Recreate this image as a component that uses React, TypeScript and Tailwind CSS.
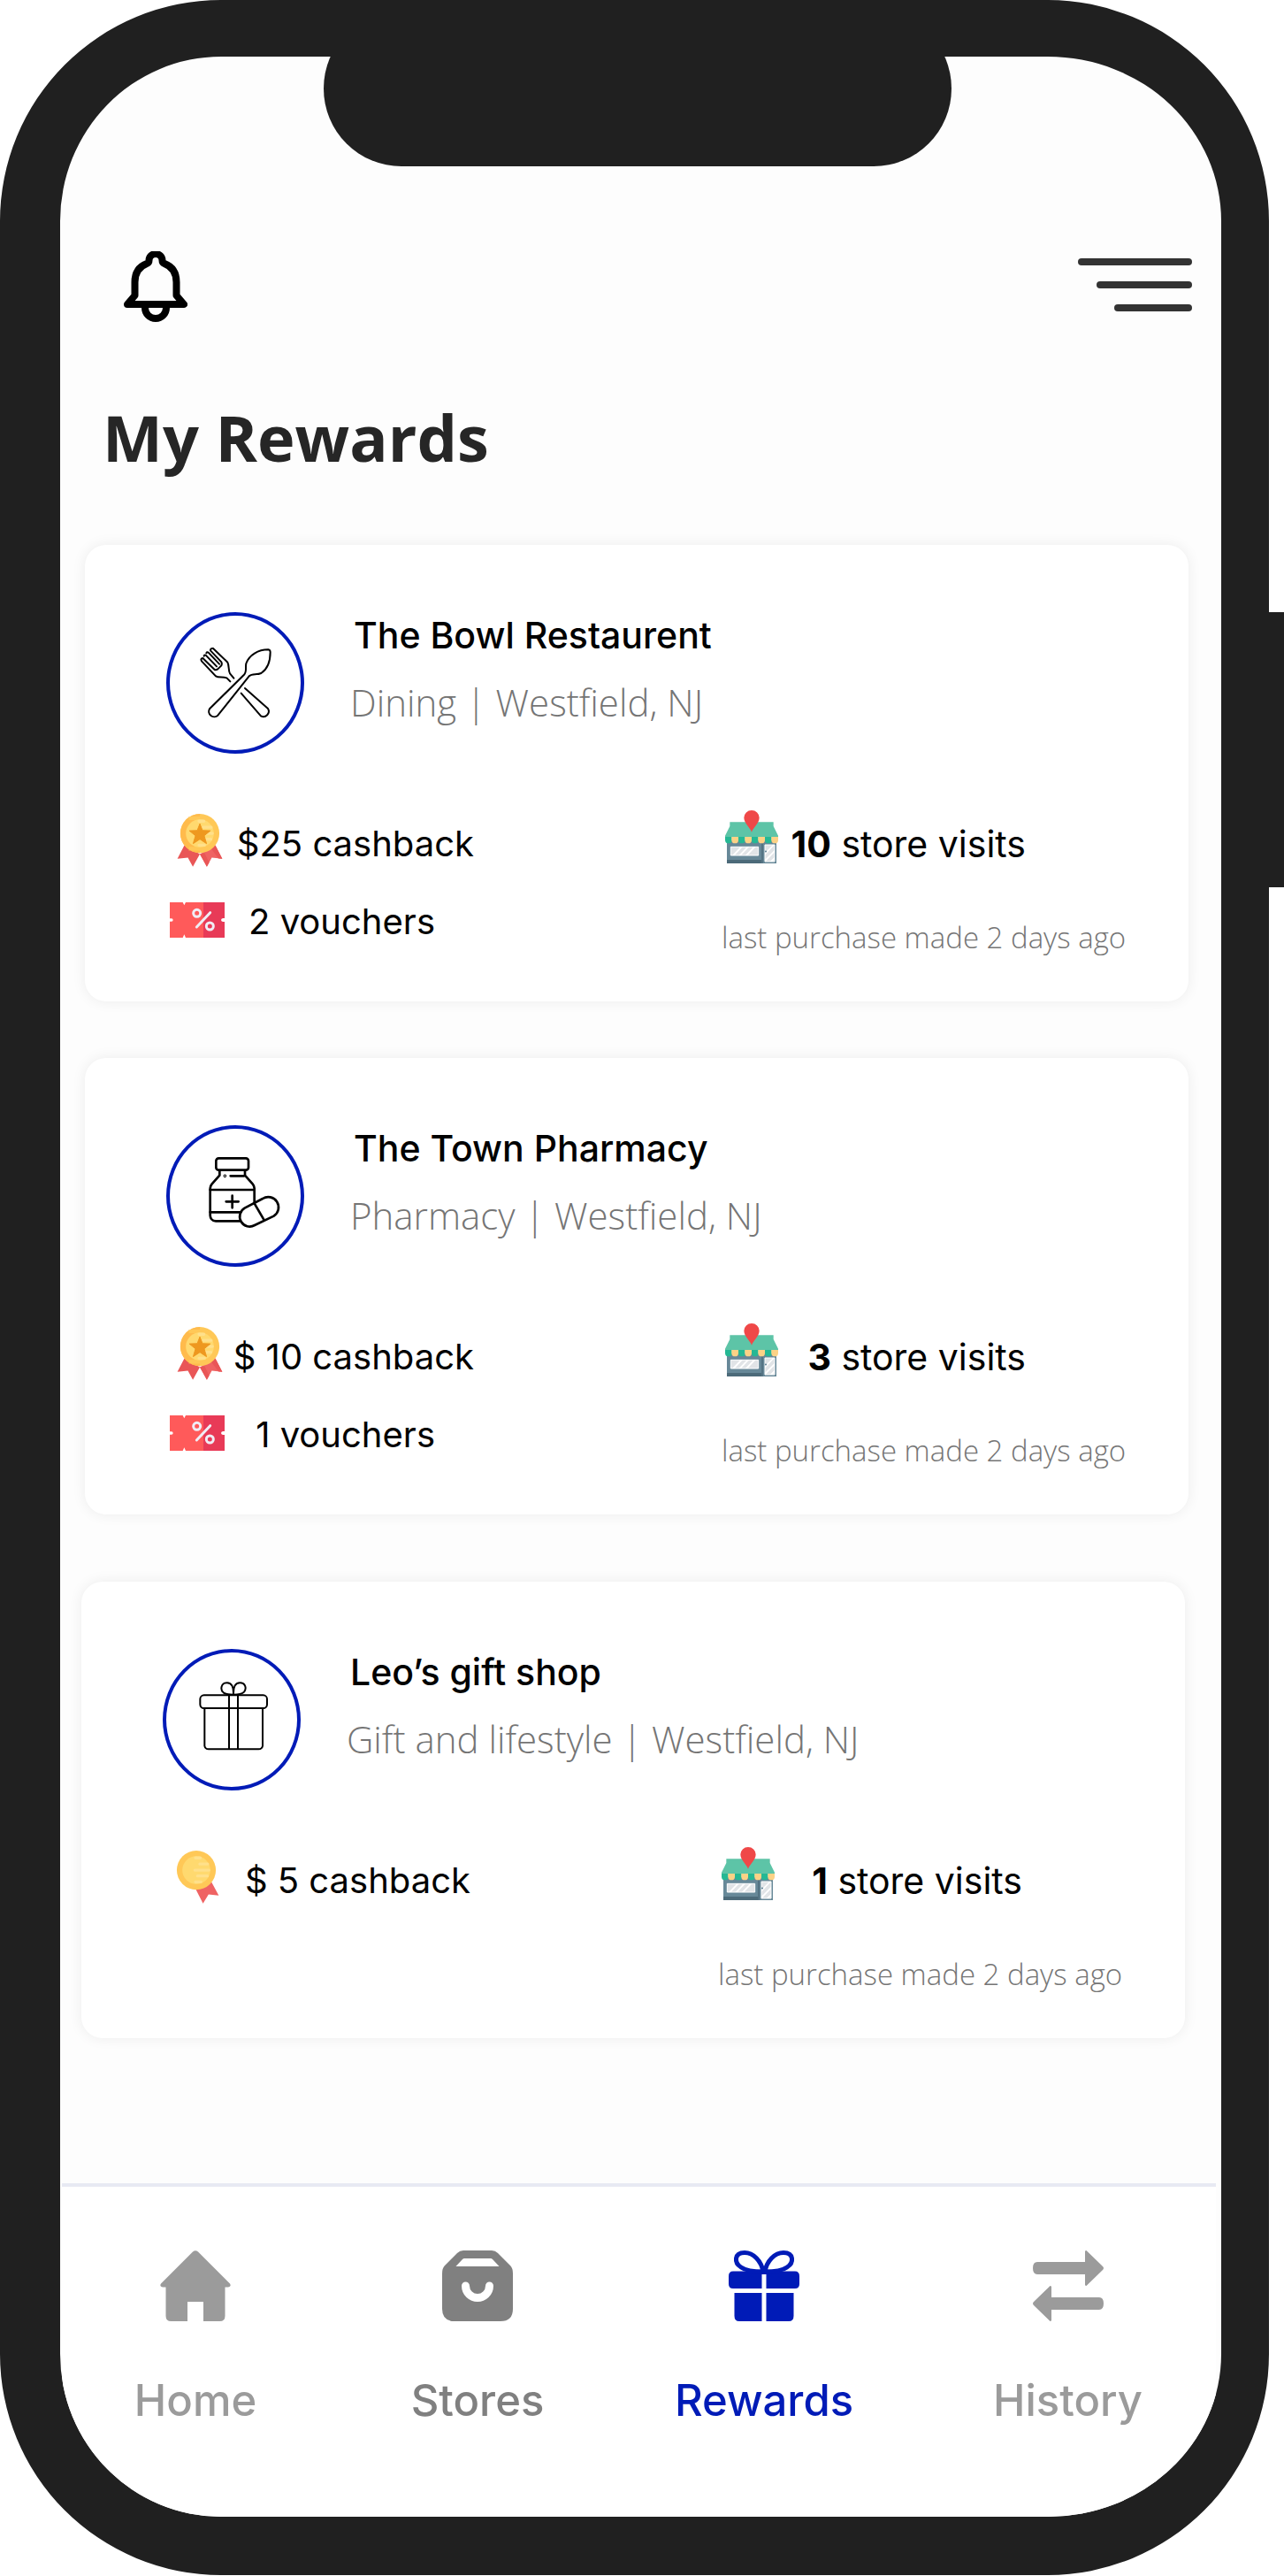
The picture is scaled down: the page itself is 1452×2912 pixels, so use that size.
import type { ReactNode } from "react";

function BellIcon() {
  return (
    <svg viewBox="0 0 72 80" className="h-20 w-[72px]" fill="none" stroke="#000" strokeWidth="8" strokeLinejoin="round" strokeLinecap="round" aria-hidden="true">
      <path d="M4 60 L12.5 50 V35 C12.5 24 18 17 26 14 Q28.500 13 28.500 10.500 A7.500 7.500 0 0 1 43.500 10.500 Q43.500 13 46 14 C54 17 59.500 24 59.500 35 V50 L68 60 Z" />
      <path d="M24 62 V64 A12 12 0 0 0 48 64 V62" />
    </svg>
  );
}

function DiningIcon() {
  return (
    <svg viewBox="-72 -78 444 456" className="h-full w-full" fill="none" stroke="#000" strokeWidth="6" strokeLinejoin="round" strokeLinecap="round" aria-hidden="true">
      <path d="M262 37 Q269 38 269 46 C269 78 258 104 238 117 C222 124 208 117 197 127 L91 260 A18 18 0 0 1 63 238 L180 122 C190 112 184 98 187 84 C197 56 228 37 262 37 Z" />
      <path d="M133 145 L122 134 C112 128 94 133 84 127 L36 76 Q31 67 40 66 L80 105 Q85 107 90 104 L103 91 Q106 85 103 79 L66 40 Q65 32 75 33 L124 80 C130 90 126 108 132 118 L145 134" />
      <path d="M44 59 Q44 54 50 56 L87 94 M52 49 Q54 44 59 47 L96 86" />
      <path d="M183 168 L261 237 A18 18 0 0 1 237 262 L170 185" />
    </svg>
  );
}

function PharmacyIcon() {
  return (
    <svg viewBox="66 78 444 456" className="h-full w-full" fill="none" stroke="#000" strokeWidth="8" strokeLinejoin="round" strokeLinecap="round" aria-hidden="true">
      <rect x="223" y="178" width="110" height="40" rx="9" />
      <path d="M235 220 V236 L209 265 Q203 272 203 280 V372 Q204 390 222 391 H304 M321 220 V236 L347 265 Q353 272 353 280 V330" />
      <path d="M203 285 H353 M203 361 H306 M272 238 H318 M278 305 V346 M257 325 H299" />
      <circle cx="253" cy="238" r="1.500" />
      <path d="M320 347 L381 315 A34 34 0 0 1 419 374 L354 405 A33 33 0 0 1 320 347 Z" />
      <path d="M353 331 L385 386" />
    </svg>
  );
}

function GiftShopIcon() {
  return (
    <svg viewBox="54 84 444 456" className="h-full w-full" fill="none" stroke="#000" strokeWidth="6" strokeLinejoin="round" aria-hidden="true">
      <rect x="169" y="229" width="227" height="44" rx="13" />
      <path d="M184 274 V401 Q186 412 198 412 H367 Q379 412 381 401 V274 M267 229 V411 M297 229 V411" />
      <path d="M282 227 C283 200 276 187 260 187 C240 187 236 210 248 220 Q258 227 282 227 C306 227 312 224 318 218 C328 205 322 187 304 187 C288 187 281 200 282 227" />
    </svg>
  );
}

function MedalIcon({ plain = false }: { plain?: boolean }) {
  return (
    <svg viewBox="90 88 156 182" className="ml-2 h-[60px] w-[52px]" aria-hidden="true">
      {!plain && <path d="M115 196 L91 242 L127 238 L144 269 L168 226 Z" fill="#e95657" />}
      <path d={plain ? "M167 222 L191 269 L210 238 L245 242 L220 196 Z" : "M221 196 L245 242 L209 238 L192 269 L168 226 Z"} fill="#ef6363" />
      {!plain && <path d="M221 196 L245 242 L232 241 L205 205 Z M168 226 L192 269 L200 255 L184 222 Z" fill="#e95657" />}
      <circle cx="168" cy="155" r="67" fill="#ffc857" />
      {!plain && (
        <path d="M168 88 A67 67 0 0 0 168 222 V214 H130 V201 H150 V109 H130 V97 H168 Z" fill="#ffbb4c" />
      )}
      <circle cx="168" cy="155" r="48" fill="#ffd96f" />
      <path d="M165 113 H182 M180 134 H207 M163 155 H211 M172 175 H206 M165 195 H184" stroke="#ffe08b" strokeWidth="10" strokeLinecap="round" />
      {!plain && <path d="M168 122 L177 145 L204 146 L183 163 L191 190 L168 175 L145 190 L153 163 L132 146 L159 145 Z" fill="#ee981f" stroke="#ee981f" strokeWidth="3" strokeLinejoin="round" />}
    </svg>
  );
}

function TicketIcon() {
  return (
    <svg viewBox="66 390 186 120" className="mb-1 h-10 w-[62px]" aria-hidden="true">
      <path d="M66 390 H110 L115 400 L120 390 H180 V510 H120 L115 499 L110 510 H66 V455 H72 Q77 455 77 450 Q77 445 72 445 H66 Z" fill="#ff5a5a" />
      <path d="M180 390 H252 V444 H246 Q240 445 240 450 Q240 455 246 456 H252 V510 H180 Z" fill="#e83a57" />
      <g fill="none" stroke="#f0edf5" strokeWidth="9">
        <circle cx="158" cy="427" r="12" />
        <circle cx="202" cy="471" r="12" />
        <path d="M157 474 L203 425" strokeLinecap="round" strokeWidth="9" />
      </g>
    </svg>
  );
}

function StoreIcon() {
  const scallops = [
    { x: 60, fill: "#25b894" },
    { x: 82, fill: "#fbd286" },
    { x: 105, fill: "#25b894" },
    { x: 127, fill: "#fbd286" },
    { x: 150, fill: "#25b894" },
    { x: 172, fill: "#fbd286" },
    { x: 195, fill: "#25b894" },
    { x: 217, fill: "#fbd286" },
  ];
  return (
    <svg viewBox="60 78 180 180" className="h-[60px] w-[60px] self-start" aria-hidden="true">
      <rect x="66" y="180" width="168" height="78" fill="#678898" />
      <rect x="66" y="246" width="120" height="12" fill="#4c6a79" />
      <rect x="183" y="190" width="6" height="68" fill="#547383" />
      <rect x="79" y="202" width="94" height="29" fill="#e1e4e7" />
      <rect x="195" y="195" width="33" height="57" fill="#e1e4e7" />
      <path d="M84 231 L112 202 H120 L92 231 Z M106 231 L134 202 H142 L114 231 Z M128 231 L156 202 H164 L136 231 Z M195 222 L222 195 H228 L195 230 Z M195 245 L228 212 V220 L197 252 H195 Z M212 252 L228 236 V244 L220 252 Z" fill="#fff" />
      <path d="M79 202 H173 V231 H79 Z M195 195 H228 V252 H195 Z" fill="none" stroke="#fff" strokeWidth="3" />
      <rect x="195" y="215" width="6" height="5" fill="#678898" />
      <path d="M76 118 H224 V132 L240 164 V168 H60 V164 L76 132 Z" fill="#5dc4a7" />
      {scallops.map((s) => (
        <path key={s.x} d={`M${s.x} 168 h23 v11 a11.500 11 0 0 1 -23 0 Z`} fill={s.fill} />
      ))}
      <path d="M150 152 C144 136 124 122 124 103 A26 25 0 0 1 176 103 C176 122 156 136 150 152 Z" fill="#ef4848" />
    </svg>
  );
}

function HomeIcon() {
  return (
    <svg viewBox="0 0 80 80" className="h-20 w-20" fill="currentColor" aria-hidden="true">
      <path d="M37 1.500 Q40 -1 43 1.500 L79 37.500 Q81 41 77 41.500 H73.500 V74 Q73.500 80 67.500 80 H49 V58 H31 V80 H12.500 Q6.500 80 6.500 74 V41.500 H3 Q-1 41 1 37.500 Z" />
    </svg>
  );
}

function BagIcon() {
  return (
    <svg viewBox="0 0 80 80" className="h-20 w-20" aria-hidden="true">
      <path fill="currentColor" fillRule="evenodd" d="M24 0 H56 Q60 0 63 3 L77 17 Q80 20 80 26 V66 Q80 80 66 80 H14 Q0 80 0 66 V26 Q0 20 3 17 L17 3 Q20 0 24 0 Z M25 9 Q24 9 23 10 L15.500 18 H64.500 L57 10 Q56 9 55 9 Z" />
      <path d="M26.500 40 C26.500 48 33 53.500 40 53.500 S53.500 48 53.500 40" fill="none" stroke="#fff" strokeWidth="9" strokeLinecap="round" />
    </svg>
  );
}

function GiftIcon() {
  return (
    <svg viewBox="0 0 80 80" className="h-20 w-20" fill="currentColor" aria-hidden="true">
      <path d="M5 23.500 H75 Q80 23.500 80 29 V38 Q80 43 75 43 H42.500 V27 H37.500 V43 H5 Q0 43 0 38 V29 Q0 23.500 5 23.500 Z" />
      <path d="M6.500 48 H37.500 V80 H12 Q6.500 80 6.500 74 Z M42.500 48 H73.500 V74 Q73.500 80 68 80 H42.500 Z" />
      <path d="M39 24 C37 12 28 2.500 18 2.500 C6 2.500 6 14 14 19 C21 24 32 24 39 24 Z M41 24 C43 12 52 2.500 62 2.500 C74 2.500 74 14 66 19 C59 24 48 24 41 24 Z" fill="none" stroke="currentColor" strokeWidth="5" />
    </svg>
  );
}

function TransferIcon() {
  return (
    <svg viewBox="0 0 80 80" className="h-20 w-20" fill="currentColor" aria-hidden="true">
      <path d="M5 13 H59 V1 Q60 -1 61.500 1 L79 18 Q81 20 79 22 L61.500 39 Q60 41 59 39 V27 H5 Q0 27 0 20 Q0 13 5 13 Z" />
      <path d="M75 53 H21 V41 Q20 39 18.500 41 L1 58 Q-1 60 1 62 L18.500 79 Q20 81 21 79 V67 H75 Q80 67 80 60 Q80 53 75 53 Z" />
    </svg>
  );
}

type Reward = {
  name: string;
  detail: string;
  icon: ReactNode;
  cashback: string;
  vouchers?: string;
  visits: string;
  plainMedal?: boolean;
  spacing: string;
};

const rewards: Reward[] = [
  { name: "The Bowl Restaurent", detail: "Dining | Westfield, NJ", icon: <DiningIcon />, cashback: "$25 cashback", vouchers: "2 vouchers", visits: "10", spacing: "ml-7 mr-[37px]" },
  { name: "The Town Pharmacy", detail: "Pharmacy | Westfield, NJ", icon: <PharmacyIcon />, cashback: "$ 10 cashback", vouchers: "1 vouchers", visits: "3", spacing: "ml-7 mr-[37px] mt-16" },
  { name: "Leo’s gift shop", detail: "Gift and lifestyle | Westfield, NJ", icon: <GiftShopIcon />, cashback: "$ 5 cashback", visits: "1", plainMedal: true, spacing: "ml-6 mr-[41px] mt-[76px]" },
];

function RewardCard({ reward }: { reward: Reward }) {
  return (
    <article className={`${reward.spacing} rounded-3xl bg-white pt-[76px] pr-[66px] pb-[52px] pl-[92px] shadow-[0_0_16px_rgba(0,0,0,0.07)]`}>
      <div className="flex gap-[52px]">
        <div className="h-40 w-[156px] shrink-0 rounded-[50%] border-4 border-[#001bb7]">{reward.icon}</div>
        <div className="pt-[2px]">
          <h2 className="pl-1 text-[41px] leading-[48px] font-medium">{reward.name}</h2>
          <p className="mt-7 font-['Open_Sans'] text-[42px] leading-[48px] font-light text-[#757575]">{reward.detail}</p>
        </div>
      </div>
      <div className="mt-16 flex justify-between leading-[52px]">
        <div className="w-[348px] pl-1 text-[40px]">
          <div className="flex h-16 items-end justify-between">
            <MedalIcon plain={reward.plainMedal} />
            <span>{reward.cashback}</span>
          </div>
          {reward.vouchers && (
            <div className="mt-9 flex items-center justify-between pr-11">
              <TicketIcon />
              <span>{reward.vouchers}</span>
            </div>
          )}
        </div>
        <div className="w-[462px]">
          <div className="flex h-16 w-[344px] items-end justify-between pl-1 text-[41px]">
            <StoreIcon />
            <span>
              <b className="font-bold">{reward.visits}</b> store visits
            </span>
          </div>
          <p className="mt-[60px] font-['Open_Sans'] text-[33px] leading-10 font-light whitespace-nowrap text-[#757575]">last purchase made 2 days ago</p>
        </div>
      </div>
    </article>
  );
}

const tabs = [
  { label: "Home", icon: <HomeIcon />, className: "text-[#9b9b9b]" },
  { label: "Stores", icon: <BagIcon />, className: "text-[#808080]" },
  { label: "Rewards", icon: <GiftIcon />, className: "text-[#001bb7]" },
  { label: "History", icon: <TransferIcon />, className: "text-[#9b9b9b] pl-5" },
];

export default function App() {
  return (
    <div className="flex w-full bg-white font-[Inter,sans-serif] text-black">
      <div className="relative min-w-0 flex-1 overflow-hidden rounded-[250px] border-t-[64px] border-r-[54px] border-b-[66px] border-l-[68px] border-[#202020] bg-[#fdfdfd]">
        <div className="absolute -top-[52px] left-[298px] right-[305px] h-44 rounded-[88px] bg-[#202020]" />
        <header className="flex items-start justify-between pt-[220px] pr-[33px] pl-[72px]">
          <button type="button" aria-label="Notifications">
            <BellIcon />
          </button>
          <button type="button" aria-label="Menu" className="mt-2 flex flex-col items-end gap-[18px]">
            <span className="h-2 w-[129px] rounded-full bg-[#333]" />
            <span className="h-2 w-[108px] rounded-full bg-[#333]" />
            <span className="h-2 w-[88px] rounded-full bg-[#333]" />
          </button>
        </header>
        <main className="pb-[164px]">
          <h1 className="mt-[86px] mb-[78px] ml-12 font-['Open_Sans'] text-[72px] leading-[88px] font-bold text-[#262626]">My Rewards</h1>
          {rewards.map((reward) => (
            <RewardCard key={reward.name} reward={reward} />
          ))}
        </main>
        <nav className="mr-[6px] ml-[2px] grid grid-cols-[302fr_336fr_312fr_355fr] border-t-4 border-[#e8eaf3] bg-white pt-[72px] pb-[101px]">
          {tabs.map((tab) => (
            <a key={tab.label} href="#" className={`${tab.className} flex flex-col items-center gap-[60px] text-[49px] leading-[60px] font-medium`}>
              {tab.icon}
              <span>{tab.label}</span>
            </a>
          ))}
        </nav>
      </div>
      <div className="mt-[692px] h-[311px] w-[17px] shrink-0 bg-[#202020]" />
    </div>
  );
}
